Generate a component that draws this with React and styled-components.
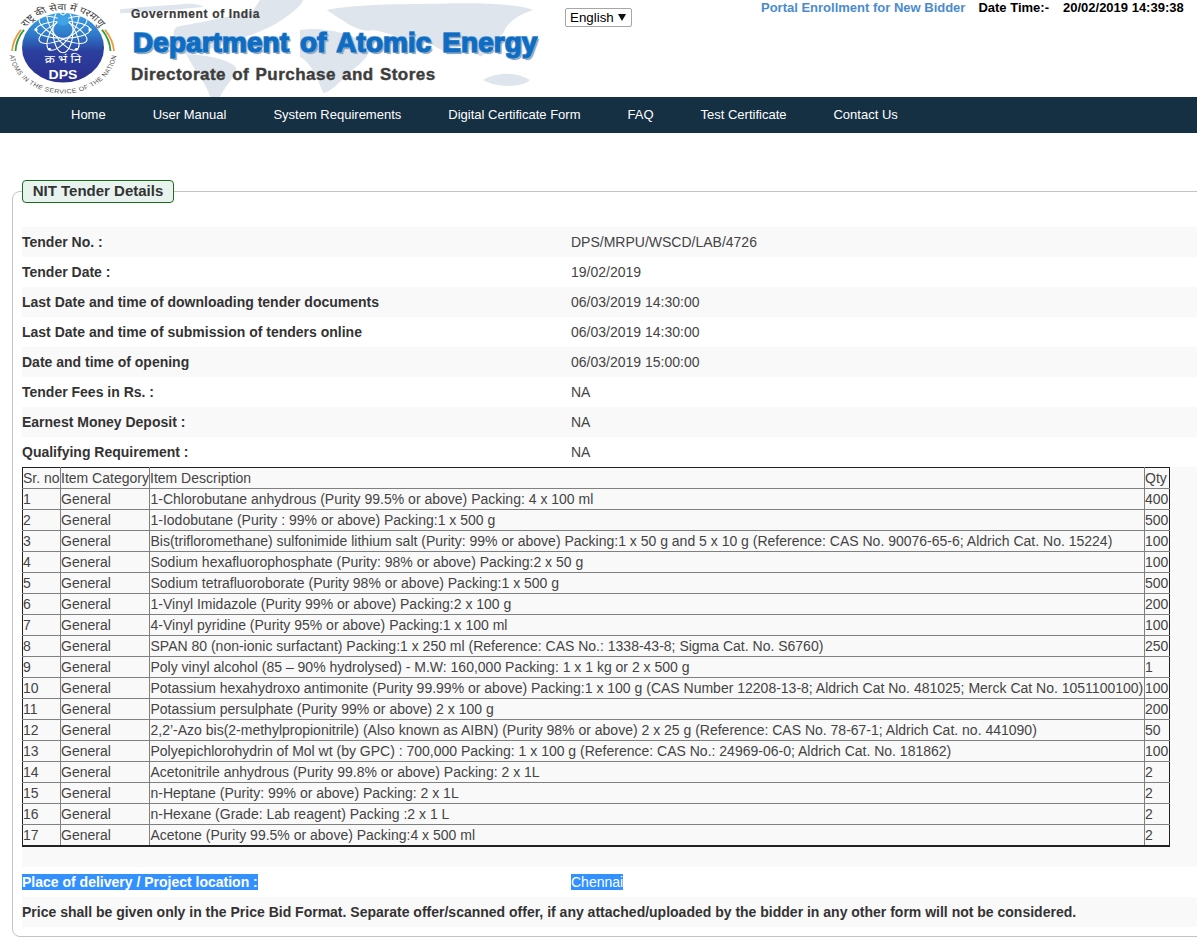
import React from "react";
import styled, { createGlobalStyle } from "styled-components";

const GlobalStyle = createGlobalStyle`
  html, body {
    margin: 0;
    padding: 0;
    background: #fff;
    overflow-x: hidden;
    font-family: "Liberation Sans", Arial, sans-serif;
    font-size: 14px;
    color: #333;
  }
`;

const Page = styled.div`
  width: 1197px;
  overflow: hidden;
`;

const Header = styled.header`
  height: 97px;
  display: flex;
  align-items: flex-start;
`;

const LogoSlot = styled.div`
  width: 120px;
  height: 97px;
  flex: none;
`;

const Brand = styled.div`
  position: relative;
  width: 440px;
  height: 97px;
  flex: none;
  display: flex;
  flex-direction: column;
  padding-left: 11px;
  box-sizing: border-box;
`;

const WorldMap = styled.svg`
  position: absolute;
  inset: 0;
  width: 440px;
  height: 97px;
`;

const BrandLine = styled.div`
  position: relative;
  white-space: nowrap;
  font-family: "Liberation Sans", Arial, sans-serif;
  font-weight: 700;
`;

const GovLine = styled(BrandLine)`
  margin-top: 7px;
  font-size: 12px;
  line-height: 14px;
  letter-spacing: 0.65px;
  color: #3b3b3b;
  -webkit-text-stroke: 0.2px #3b3b3b;
`;

const DeptLine = styled(BrandLine)`
  margin-top: 4px;
  margin-left: 2px;
  font-size: 28px;
  line-height: 36px;
  letter-spacing: 0.05px;
  word-spacing: 3px;
  color: #0f6cc0;
  -webkit-text-stroke: 1.2px #0f6cc0;
  text-shadow: 1px 1px 0 #9cc6ea, -1px -1px 0 #9cc6ea, 1px -1px 0 #9cc6ea, -1px 1px 0 #9cc6ea, 2px 2px 1px #8b9bb0;
`;

const DirLine = styled(BrandLine)`
  margin-top: 4px;
  font-size: 17px;
  line-height: 20px;
  letter-spacing: 0.48px;
  word-spacing: 1px;
  color: #3d3d3d;
  -webkit-text-stroke: 0.4px #3d3d3d;
`;

const LangSlot = styled.div`
  width: 196px;
  flex: none;
  padding: 8px 0 0 5px;
`;

const SelectWrap = styled.div`
  position: relative;
  width: 67px;

  &::after {
    content: "";
    position: absolute;
    left: 53px;
    top: 6px;
    border-left: 4px solid transparent;
    border-right: 4px solid transparent;
    border-top: 7px solid #111;
    pointer-events: none;
  }
`;

const LangSelect = styled.select`
  appearance: none;
  width: 67px;
  height: 19px;
  box-sizing: border-box;
  font-family: "Liberation Sans", Arial, sans-serif;
  font-size: 13.33px;
  line-height: 17px;
  color: #000;
  background: #fff;
  border: 1px solid #a6a6a6;
  border-radius: 2px;
  padding: 0 0 0 4px;
  display: block;
`;

const TopInfo = styled.div`
  display: flex;
  align-items: baseline;
  padding-top: 1px;
  font-size: 13px;
  font-weight: 700;
  white-space: nowrap;
  color: #000;
  line-height: 14px;
`;

const PortalLink = styled.a`
  color: #4a8bd0;
  font-size: 13px;
  text-decoration: none;
  margin-right: 13px;
`;

const ClockValue = styled.span`
  margin-left: 14px;
`;

const Nav = styled.nav`
  height: 36px;
  background: #152f43;
  display: flex;
  align-items: center;
  gap: 47px;
  padding: 0 0 1px 71px;
  box-sizing: border-box;
`;

const NavLink = styled.a`
  color: #fff;
  font-size: 13px;
  text-decoration: none;
  white-space: nowrap;
`;

const Panel = styled.fieldset`
  margin: 47px 0 0 12px;
  padding: 24px 0 9px 9px;
  width: 1240px;
  box-sizing: border-box;
  border: 1px solid #c4c4c4;
  border-radius: 8px;
  min-width: 0;
`;

const PanelLegend = styled.legend`
  margin: 0 13px 0 0;
  padding: 0;
`;

const LegendBox = styled.div`
  width: 152px;
  height: 23px;
  box-sizing: border-box;
  border: 1px solid #1b6b1b;
  border-radius: 4px;
  background: #e8f3ef;
  text-align: center;
  font-size: 15px;
  font-weight: 700;
  line-height: 20px;
  color: #333;
`;

const Rows = styled.div`
  display: flex;
  flex-direction: column;

  & > div:nth-child(odd) {
    background: #f9f9f9;
  }
`;

const FieldRow = styled.div`
  display: grid;
  grid-template-columns: 549px 1fr;
  height: 30px;
  align-items: center;
`;

const FieldLabel = styled.div`
  font-weight: 700;
  white-space: nowrap;
`;

const FieldValue = styled.div`
  color: #444;
`;

const TableRow = styled.div`
  padding-bottom: 20px;
`;

const NoteRow = styled.div`
  height: 30px;
  display: flex;
  align-items: center;
  font-weight: 700;
  white-space: nowrap;
`;

const Selected = styled.span`
  background: #3390ff;
  color: #fff;
  display: inline-block;
  line-height: 16px;
`;

const ItemTable = styled.table`
  width: 1147px;
  table-layout: fixed;
  border-collapse: collapse;
  border: 1px solid #222;
  font-size: 14px;
  color: #444;

  td, th {
    border: 1px solid #808080;
    padding: 0;
    height: 20px;
    line-height: 20px;
    font-weight: 400;
    text-align: left;
    white-space: nowrap;
    overflow: hidden;
  }

  td:nth-child(3) {
    padding-left: 0.5px;
  }

  tr:first-child th {
    border-top-color: #222;
  }

  tbody tr:nth-child(odd) {
    background: #f9f9f9;
  }

  tbody tr:last-child td {
    border-bottom: 2px solid #222;
  }

  tr > :first-child {
    border-left-color: #222;
  }

  tr > :last-child {
    border-right-color: #222;
  }
`;

// the logo image is squashed vertically in the page, hence preserveAspectRatio none
function DpsLogo() {
  const petals = [0, 30, 60, 90, 120, 150];
  return (
    <svg width="120" height="97" viewBox="0 0 120 114" preserveAspectRatio="none">
      <defs>
        <linearGradient id="dpsFill" x1="0" y1="0" x2="0" y2="1">
          <stop offset="0" stopColor="#3fa3e6" />
          <stop offset="0.3" stopColor="#2f7ccb" />
          <stop offset="0.55" stopColor="#2b3f9f" />
          <stop offset="1" stopColor="#2c2f8e" />
        </linearGradient>
        <clipPath id="dpsClip">
          <circle cx="63" cy="56" r="41" />
        </clipPath>
        <path id="hindiArc" d="M19 56 A44 44 0 0 1 107 56" />
        <path id="englishArc" d="M9 58 A54 52 0 0 0 117 58" />
      </defs>
      <circle cx="63" cy="56" r="41" fill="url(#dpsFill)" />
      <g clipPath="url(#dpsClip)">
        {petals.map((angle) => (
          <ellipse
            key={angle}
            cx="63"
            cy="35"
            rx="27"
            ry="10"
            fill="none"
            stroke="#fff"
            strokeWidth="1.1"
            transform={`rotate(${angle} 63 35)`}
          />
        ))}
      </g>
      <circle cx="63" cy="24" r="6" fill="#3fa3e6" />
      <circle cx="36" cy="35" r="1.7" fill="#fff" />
      <circle cx="90" cy="35" r="1.7" fill="#fff" />
      <circle cx="49.5" cy="58" r="1.7" fill="#fff" />
      <circle cx="76.5" cy="58" r="1.7" fill="#fff" />
      <path d="M12 60 A51 51 0 0 1 21 35" fill="none" stroke="#ef9a3c" strokeWidth="1.8" />
      <path d="M15.5 60 A48 48 0 0 1 24 35" fill="none" stroke="#2f9a46" strokeWidth="1.8" />
      <path d="M114 60 A51 51 0 0 0 105 35" fill="none" stroke="#ef9a3c" strokeWidth="1.8" />
      <path d="M110.5 60 A48 48 0 0 0 102 35" fill="none" stroke="#2f9a46" strokeWidth="1.8" />
      <text fontFamily="'Noto Sans', 'DejaVu Sans', sans-serif" fontSize="11" fill="#444">
        <textPath href="#hindiArc" startOffset="50%" textAnchor="middle">राष्ट्र की सेवा में परमाणु</textPath>
      </text>
      <text fontFamily="'Liberation Sans', sans-serif" fontSize="7" fill="#555" letterSpacing="0.45">
        <textPath href="#englishArc" startOffset="50%" textAnchor="middle">ATOMS IN THE SERVICE OF THE NATION</textPath>
      </text>
      <text x="63" y="74" textAnchor="middle" fontFamily="'Noto Sans', 'DejaVu Sans', sans-serif" fontSize="13" fill="#fff">क्र भं नि</text>
      <text x="63" y="93" textAnchor="middle" fontFamily="'Liberation Sans', sans-serif" fontSize="14" fontWeight="700" fill="#fff">DPS</text>
    </svg>
  );
}

function MapBackdrop() {
  return (
    <WorldMap viewBox="0 0 1320 291">
      <g fill="#dfe5ed">
        <path d="M0 28 C60 20 130 18 190 12 C220 10 240 14 250 20 C200 26 120 34 0 40 Z" />
        <path d="M420 0 L550 0 C540 24 500 50 470 70 C430 95 360 115 300 135 C250 155 210 170 185 160 C165 130 150 100 170 80 C230 70 330 50 400 30 Z" />
        <path d="M200 165 C260 160 340 185 350 205 C340 240 310 265 300 291 L270 291 C260 250 225 215 200 165 Z" />
        <path d="M620 30 C720 10 880 14 1000 10 C1100 8 1200 14 1240 30 C1190 45 1160 70 1150 100 C1120 120 1110 160 1080 170 C1050 140 1010 130 990 160 C960 150 930 130 900 110 C860 130 820 100 760 90 C720 100 680 70 620 30 Z" />
        <path d="M540 90 C600 80 680 95 740 130 C770 150 720 195 690 215 C660 245 640 270 610 280 C590 230 575 190 540 170 Z" />
        <path d="M1090 240 C1130 215 1190 215 1230 240 C1210 262 1130 265 1090 240 Z" />
      </g>
    </WorldMap>
  );
}

const NAV_ITEMS = [
  "Home",
  "User Manual",
  "System Requirements",
  "Digital Certificate Form",
  "FAQ",
  "Test Certificate",
  "Contact Us",
];

const FIELDS_TOP = [
  ["Tender No. :", "DPS/MRPU/WSCD/LAB/4726"],
  ["Tender Date :", "19/02/2019"],
  ["Last Date and time of downloading tender documents", "06/03/2019 14:30:00"],
  ["Last Date and time of submission of tenders online", "06/03/2019 14:30:00"],
  ["Date and time of opening", "06/03/2019 15:00:00"],
  ["Tender Fees in Rs. :", "NA"],
  ["Earnest Money Deposit :", "NA"],
  ["Qualifying Requirement :", "NA"],
];

const ITEMS = [
  ["1-Chlorobutane anhydrous (Purity 99.5% or above) Packing: 4 x 100 ml", "400"],
  ["1-Iodobutane (Purity : 99% or above) Packing:1 x 500 g", "500"],
  ["Bis(trifloromethane) sulfonimide lithium salt (Purity: 99% or above) Packing:1 x 50 g and 5 x 10 g (Reference: CAS No. 90076-65-6; Aldrich Cat. No. 15224)", "100"],
  ["Sodium hexafluorophosphate (Purity: 98% or above) Packing:2 x 50 g", "100"],
  ["Sodium tetrafluoroborate (Purity 98% or above) Packing:1 x 500 g", "500"],
  ["1-Vinyl Imidazole (Purity 99% or above) Packing:2 x 100 g", "200"],
  ["4-Vinyl pyridine (Purity 95% or above) Packing:1 x 100 ml", "100"],
  ["SPAN 80 (non-ionic surfactant) Packing:1 x 250 ml (Reference: CAS No.: 1338-43-8; Sigma Cat. No. S6760)", "250"],
  ["Poly vinyl alcohol (85 – 90% hydrolysed) - M.W: 160,000 Packing: 1 x 1 kg or 2 x 500 g", "1"],
  ["Potassium hexahydroxo antimonite (Purity 99.99% or above) Packing:1 x 100 g (CAS Number 12208-13-8; Aldrich Cat No. 481025; Merck Cat No. 1051100100)", "100"],
  ["Potassium persulphate (Purity 99% or above) 2 x 100 g", "200"],
  ["2,2’-Azo bis(2-methylpropionitrile) (Also known as AIBN) (Purity 98% or above) 2 x 25 g (Reference: CAS No. 78-67-1; Aldrich Cat. no. 441090)", "50"],
  ["Polyepichlorohydrin of Mol wt (by GPC) : 700,000 Packing: 1 x 100 g (Reference: CAS No.: 24969-06-0; Aldrich Cat. No. 181862)", "100"],
  ["Acetonitrile anhydrous (Purity 99.8% or above) Packing: 2 x 1L", "2"],
  ["n-Heptane (Purity: 99% or above) Packing: 2 x 1L", "2"],
  ["n-Hexane (Grade: Lab reagent) Packing :2 x 1 L", "2"],
  ["Acetone (Purity 99.5% or above) Packing:4 x 500 ml", "2"],
];

export default function App() {
  return (
    <Page>
      <GlobalStyle />
      <Header>
        <LogoSlot>
          <DpsLogo />
        </LogoSlot>
        <Brand>
          <MapBackdrop />
          <GovLine>Government of India</GovLine>
          <DeptLine>Department of Atomic Energy</DeptLine>
          <DirLine>Directorate of Purchase and Stores</DirLine>
        </Brand>
        <LangSlot>
          <SelectWrap>
            <LangSelect defaultValue="English">
              <option>English</option>
            </LangSelect>
          </SelectWrap>
        </LangSlot>
        <TopInfo>
          <PortalLink href="#">Portal Enrollment for New Bidder</PortalLink>
          <span>Date Time:-</span>
          <ClockValue>20/02/2019 14:39:38</ClockValue>
        </TopInfo>
      </Header>
      <Nav>
        {NAV_ITEMS.map((item) => (
          <NavLink href="#" key={item}>{item}</NavLink>
        ))}
      </Nav>
      <Panel>
        <PanelLegend>
          <LegendBox>NIT Tender Details</LegendBox>
        </PanelLegend>
        <Rows>
          {FIELDS_TOP.map(([label, value]) => (
            <FieldRow key={label}>
              <FieldLabel>{label}</FieldLabel>
              <FieldValue>{value}</FieldValue>
            </FieldRow>
          ))}
          <TableRow>
            <ItemTable>
              <colgroup>
                <col style={{ width: 38 }} />
                <col style={{ width: 89 }} />
                <col style={{ width: 995 }} />
                <col style={{ width: 25 }} />
              </colgroup>
              <thead>
                <tr>
                  <th>Sr. no</th>
                  <th>Item Category</th>
                  <th>Item Description</th>
                  <th>Qty</th>
                </tr>
              </thead>
              <tbody>
                {ITEMS.map(([desc, qty], i) => (
                  <tr key={desc}>
                    <td>{i + 1}</td>
                    <td>General</td>
                    <td>{desc}</td>
                    <td>{qty}</td>
                  </tr>
                ))}
              </tbody>
            </ItemTable>
          </TableRow>
          <FieldRow>
            <FieldLabel><Selected>Place of delivery / Project location :</Selected></FieldLabel>
            <FieldValue><Selected>Chennai</Selected></FieldValue>
          </FieldRow>
          <NoteRow>Price shall be given only in the Price Bid Format. Separate offer/scanned offer, if any attached/uploaded by the bidder in any other form will not be considered.</NoteRow>
        </Rows>
      </Panel>
    </Page>
  );
}
